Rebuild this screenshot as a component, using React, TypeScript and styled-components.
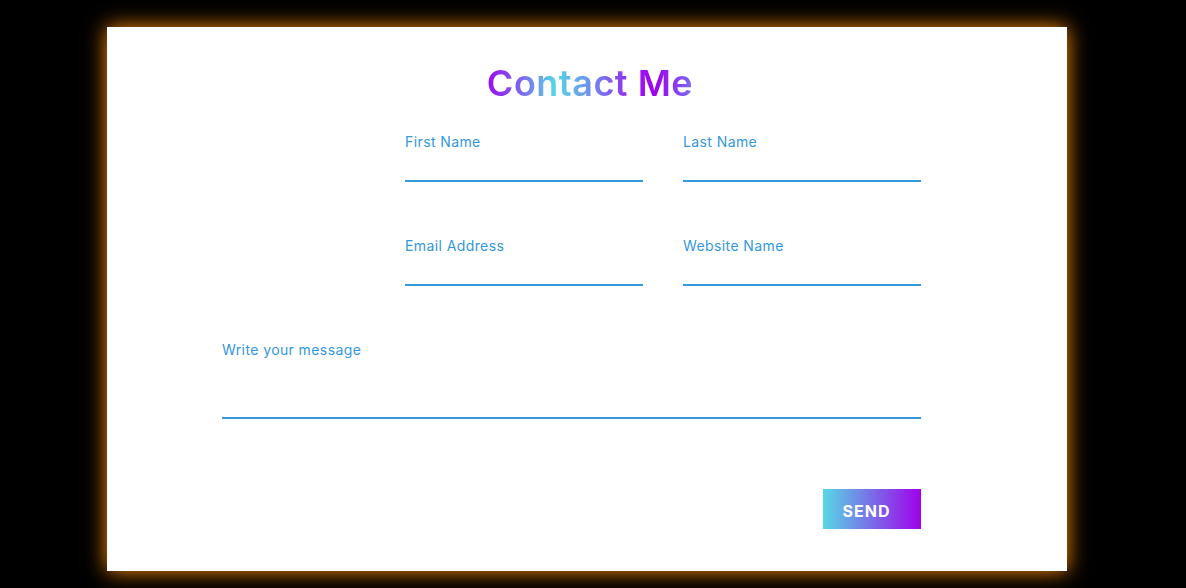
import React from "react";
import styled, { createGlobalStyle } from "styled-components";

const GlobalStyle = createGlobalStyle`
  html, body {
    margin: 0;
    padding: 0;
    background: #000;
  }
  body {
    font-family: Inter, "Noto Sans", "Liberation Sans", sans-serif;
  }
  * { box-sizing: border-box; }
`;

const Page = styled.div`
  width: 1186px;
  height: 588px;
  background: #000;
  padding: 27px 0 0 107px;
  overflow: hidden;
`;

const Card = styled.div`
  width: 960px;
  height: 544px;
  background: #fff;
  box-shadow: 0 0 20px #ff8c00;
  padding-top: 34px;
`;

const Title = styled.h1`
  margin: 0 auto;
  width: fit-content;
  transform: translateX(3px);
  font-family: Inter, "Noto Sans", sans-serif;
  font-size: 36px;
  font-weight: 600;
  line-height: 44px;
  letter-spacing: 0.5px;
  background: linear-gradient(
    to right,
    #9a0cf0 0%,
    #7a6ff0 18%,
    #56d8e4 33%,
    #6f8ef0 50%,
    #9a1cf0 72%,
    #9f01ea 82%,
    #7a6ff0 100%
  );
  -webkit-background-clip: text;
  background-clip: text;
  color: transparent;
`;

const Form = styled.form`
  margin: 26px 0 0 115px;
  width: 699px;
  display: flex;
  flex-direction: column;
`;

const Row = styled.div<{ $top: number }>`
  display: flex;
  justify-content: flex-end;
  gap: 40px;
  margin-top: ${(p) => p.$top}px;
`;

const Field = styled.div<{ $wide?: boolean }>`
  width: ${(p) => (p.$wide ? "699px" : "238px")};
  display: flex;
  flex-direction: column;
`;

const Label = styled.label`
  font-size: 14px;
  line-height: 21px;
  letter-spacing: 0.4px;
  color: #3498db;
  font-weight: 400;
`;

const Input = styled.div<{ $h: number }>`
  height: ${(p) => p.$h}px;
  border-bottom: 2px solid #3498db;
`;

const Actions = styled.div`
  display: flex;
  justify-content: flex-end;
  margin-top: 70px;
`;

const SendButton = styled.button`
  width: 98px;
  height: 40px;
  border: none;
  padding: 4px 11px 0 0;
  background: linear-gradient(to right, #56d8e4, #9f01ea);
  color: #fff;
  font-family: Inter, "Noto Sans", sans-serif;
  font-size: 16px;
  font-weight: 700;
  letter-spacing: 1px;
  text-transform: uppercase;
  cursor: pointer;
`;

export default function App() {
  return (
    <>
      <GlobalStyle />
      <Page>
        <Card>
          <Title>Contact Me</Title>
          <Form>
            <Row $top={0}>
              <Field>
                <Label>First Name</Label>
                <Input $h={30} />
              </Field>
              <Field>
                <Label>Last Name</Label>
                <Input $h={30} />
              </Field>
            </Row>
            <Row $top={53}>
              <Field>
                <Label>Email Address</Label>
                <Input $h={30} />
              </Field>
              <Field>
                <Label>Website Name</Label>
                <Input $h={30} />
              </Field>
            </Row>
            <Row $top={53}>
              <Field $wide>
                <Label>Write your message</Label>
                <Input $h={59} />
              </Field>
            </Row>
            <Actions>
              <SendButton type="button">Send</SendButton>
            </Actions>
          </Form>
        </Card>
      </Page>
    </>
  );
}
